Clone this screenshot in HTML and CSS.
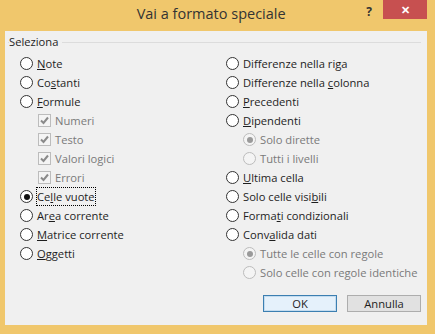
FILE: index.html
```html
<!DOCTYPE html>
<html lang="it">
<head>
  <meta charset="UTF-8">
  <title>Vai a formato speciale</title>
  <link rel="stylesheet" href="styles.css">
</head>
<body>
  <div class="window">
    <div class="titlebar">
      <div class="title">Vai a formato speciale</div>
      <div class="help">?</div>
      <div class="close">&#x2715;</div>
    </div>
    <div class="client">
      <div class="group">
        <div class="group-label">Seleziona</div>
        <div class="columns">
          <div class="col">
            <div class="row"><span class="radio"></span><span><u>N</u>ote</span></div>
            <div class="row"><span class="radio"></span><span>Co<u>s</u>tanti</span></div>
            <div class="row"><span class="radio"></span><span><u>F</u>ormule</span></div>
            <div class="row sub disabled"><span class="check"><svg width="11" height="11" viewBox="0 0 11 11"><path d="M2 5.5 L4.5 8 L9 2.5" fill="none" stroke="#8a8a8a" stroke-width="2"/></svg></span><span>Numeri</span></div>
            <div class="row sub disabled"><span class="check"><svg width="11" height="11" viewBox="0 0 11 11"><path d="M2 5.5 L4.5 8 L9 2.5" fill="none" stroke="#8a8a8a" stroke-width="2"/></svg></span><span>Testo</span></div>
            <div class="row sub disabled"><span class="check"><svg width="11" height="11" viewBox="0 0 11 11"><path d="M2 5.5 L4.5 8 L9 2.5" fill="none" stroke="#8a8a8a" stroke-width="2"/></svg></span><span>Valori logici</span></div>
            <div class="row sub disabled"><span class="check"><svg width="11" height="11" viewBox="0 0 11 11"><path d="M2 5.5 L4.5 8 L9 2.5" fill="none" stroke="#8a8a8a" stroke-width="2"/></svg></span><span>Errori</span></div>
            <div class="row"><span class="radio on"></span><span class="focus">Ce<u>l</u>le vuote</span></div>
            <div class="row"><span class="radio"></span><span>Ar<u>e</u>a corrente</span></div>
            <div class="row"><span class="radio"></span><span><u>M</u>atrice corrente</span></div>
            <div class="row"><span class="radio"></span><span><u>O</u>ggetti</span></div>
          </div>
          <div class="col">
            <div class="row"><span class="radio"></span><span>Differenze nella ri<u>g</u>a</span></div>
            <div class="row"><span class="radio"></span><span>Differenze nella <u>c</u>olonna</span></div>
            <div class="row"><span class="radio"></span><span><u>P</u>recedenti</span></div>
            <div class="row"><span class="radio"></span><span><u>D</u>ipendenti</span></div>
            <div class="row sub disabled"><span class="radio on"></span><span>Solo dirette</span></div>
            <div class="row sub disabled"><span class="radio"></span><span>Tutti i livelli</span></div>
            <div class="row"><span class="radio"></span><span><u>U</u>ltima cella</span></div>
            <div class="row"><span class="radio"></span><span>Solo celle visi<u>b</u>ili</span></div>
            <div class="row"><span class="radio"></span><span>Forma<u>t</u>i condizionali</span></div>
            <div class="row"><span class="radio"></span><span>Conv<u>a</u>lida dati</span></div>
            <div class="row sub disabled"><span class="radio on"></span><span>Tutte le celle con regole</span></div>
            <div class="row sub disabled"><span class="radio"></span><span>Solo celle con regole identiche</span></div>
          </div>
        </div>
      </div>
      <div class="buttons">
        <button class="btn default">OK</button>
        <button class="btn">Annulla</button>
      </div>
    </div>
  </div>
</body>
</html>
```

FILE: styles.css
```css
body {
  margin: 0;
  font-family: 'Open Sans', 'Noto Sans', sans-serif;
  font-size: 11.2px;
  color: #1e1e1e;
}
.window {
  width: 435px;
  height: 334px;
  background: #f0c76c;
  display: flex;
  flex-direction: column;
}
.titlebar {
  height: 31px;
  display: flex;
  align-items: flex-start;
}
.title {
  flex: 1;
  text-align: center;
  font-size: 14.5px;
  color: #333;
  padding-top: 4px;
  padding-left: 56px;
}
.help {
  font-weight: bold;
  font-size: 12px;
  color: #333;
  margin-top: 3px;
  margin-right: 11px;
}
.close {
  width: 44px;
  height: 19px;
  margin-right: 8px;
  background: #c75050;
  color: #fff;
  font-size: 11px;
  font-weight: bold;
  display: flex;
  align-items: center;
  justify-content: center;
}
.client {
  margin: 0 8px 9px 5px;
  flex: 1;
  background: #f0f0f0;
  display: flex;
  flex-direction: column;
}
.group {
  margin: 11px 6px 0 3px;
  border-top: 1px solid #dcdcdc;
  position: relative;
}
.group-label {
  position: absolute;
  top: -9px;
  left: 1px;
  padding-right: 4px;
  background: #f0f0f0;
  line-height: 16px;
}
.columns {
  display: grid;
  grid-template-columns: 206px 1fr;
  padding: 11px 0 0 12px;
}
.row {
  height: 19px;
  display: flex;
  align-items: center;
  white-space: nowrap;
}
.row u {
  text-decoration: underline;
  text-underline-offset: 1px;
}
.row.sub {
  padding-left: 18px;
}
.col + .col .row.sub {
  padding-left: 17px;
}
.disabled {
  color: #7a7a7a;
}
.radio {
  width: 11px;
  height: 11px;
  border: 1px solid #333;
  border-radius: 50%;
  background: #fff;
  margin-right: 4px;
  display: flex;
  align-items: center;
  justify-content: center;
  flex: none;
}
.radio.on::after {
  content: "";
  width: 6px;
  height: 6px;
  border-radius: 50%;
  background: #111;
}
.disabled .radio {
  border-color: #bcbcbc;
  background: #f4f4f4;
}
.disabled .radio.on::after {
  background: #9a9a9a;
}
.check {
  width: 11px;
  height: 11px;
  border: 1px solid #bcbcbc;
  background: #f4f4f4;
  margin-right: 4px;
  display: flex;
  align-items: center;
  justify-content: center;
  flex: none;
}
.focus {
  outline: 1px dotted #000;
  padding: 1px 0;
}
.buttons {
  margin-top: auto;
  display: flex;
  justify-content: flex-end;
  gap: 10px;
  padding: 0 6px 13px 0;
}
.btn {
  width: 74px;
  height: 17px;
  font-family: inherit;
  font-size: 11.2px;
  color: #1e1e1e;
  background: #e1e1e1;
  border: 1px solid #adadad;
  padding: 0;
  line-height: 14px;
}
.btn.default {
  border-color: #3c7fb1;
  background: #e5f1fb;
  box-shadow: inset 0 0 0 1px #c4dcef;
}
```
